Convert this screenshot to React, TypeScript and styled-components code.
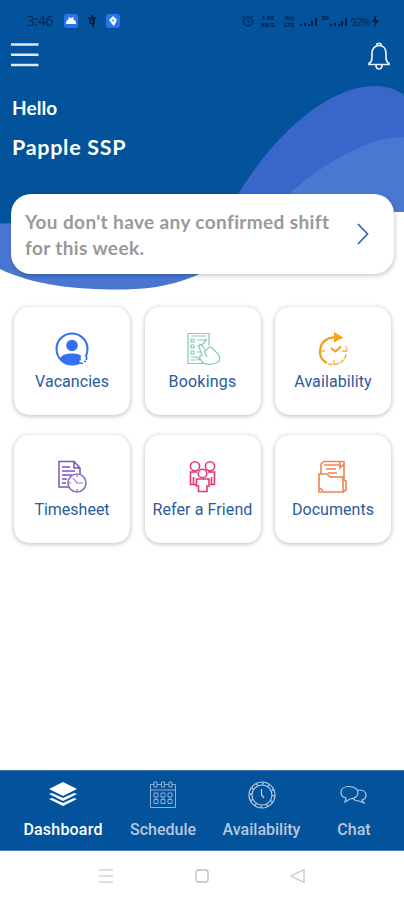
import React from "react";
import styled, { createGlobalStyle } from "styled-components";

const GlobalStyle = createGlobalStyle`
  * { box-sizing: border-box; }
  body { margin: 0; background: #fff; }
`;

const Screen = styled.div`
  width: 404px;
  height: 900px;
  display: flex;
  flex-direction: column;
  background: #fff;
  font-family: Roboto, "Liberation Sans", sans-serif;
  overflow: hidden;
`;

const Header = styled.header`
  position: relative;
  height: 300px;
  flex: none;
`;

const Backdrop = styled.svg`
  position: absolute;
  inset: 0;
  display: block;
`;

const HeaderContent = styled.div`
  position: relative;
  display: flex;
  flex-direction: column;
`;

const StatusBar = styled.div`
  height: 42px;
  padding: 0 25px 0 27px;
  display: flex;
  align-items: center;
  justify-content: space-between;
  color: #06264f;
`;

const StatusGroup = styled.div<{ $gap: number }>`
  display: flex;
  align-items: center;
  gap: ${(p) => p.$gap}px;
`;

const Time = styled.span`
  font: 400 14px/16px "Open Sans", sans-serif;
  letter-spacing: -0.4px;
  width: 28px;
  white-space: nowrap;
`;

const Stacked = styled.span<{ $width: number }>`
  width: ${(p) => p.$width}px;
  display: flex;
  flex-direction: column;
  font: 700 6px/7px Roboto, sans-serif;
  color: #041c3d;
  text-align: center;
  white-space: nowrap;
`;

const Battery = styled.span`
  font: 400 11px/13px "Open Sans", sans-serif;
  letter-spacing: -0.7px;
`;

const TopBar = styled.div`
  height: 30px;
  padding: 0 13px 0 11px;
  display: flex;
  justify-content: space-between;
`;

const IconButton = styled.button`
  padding: 0;
  border: 0;
  background: none;
  display: flex;
  height: 28px;
`;

const Greeting = styled.div`
  height: 122px;
  padding: 24px 12px 0;
  color: #fff;
  font-family: Lato, "Open Sans", sans-serif;
  font-weight: 700;
`;

const Hello = styled.p`
  margin: 0;
  font-size: 19px;
  line-height: 24px;
  letter-spacing: 0.1px;
`;

const UserName = styled.h1`
  margin: 13px 0 0;
  font-size: 21.5px;
  line-height: 28px;
  letter-spacing: 0.7px;
`;

const ShiftCard = styled.section`
  margin: 0 10px 0 11px;
  height: 80px;
  padding: 0 25px 0 14px;
  border-radius: 20px;
  background: #fff;
  box-shadow: 1px 2px 4px rgba(0, 0, 0, 0.2);
  display: flex;
  align-items: center;
  justify-content: space-between;
`;

const ShiftText = styled.p`
  margin: 2px 0 0;
  color: #999;
  font: 700 19px/26px Lato, "Open Sans", sans-serif;
  letter-spacing: 0.38px;
  white-space: nowrap;
`;

const Grid = styled.main`
  flex: 1;
  padding: 7px 13px 0 14px;
  display: grid;
  grid-template-columns: repeat(3, 116px);
  grid-auto-rows: 108px;
  column-gap: 14.5px;
  row-gap: 20px;
`;

const Tile = styled.div`
  border-radius: 15px;
  background: #fff;
  box-shadow: 0 1px 5px rgba(0, 0, 0, 0.28);
  padding-top: 24px;
  display: flex;
  flex-direction: column;
  align-items: center;
`;

const TileLabel = styled.span<{ $spacing: number }>`
  margin-top: 5px;
  color: #2b5a9d;
  font-size: 16px;
  line-height: 20px;
  letter-spacing: ${(p) => p.$spacing}px;
  white-space: nowrap;
`;

const BottomNav = styled.nav`
  height: 81px;
  padding: 0 14px;
  background: #02539b;
  border-top: 1px solid #3b73b5;
  border-bottom: 1px solid #5384c0;
  display: grid;
  grid-template-columns: 98px 102px 95px 90px;
  flex: none;
`;

const NavItem = styled.div<{ $active?: boolean }>`
  padding-top: 9px;
  display: flex;
  flex-direction: column;
  align-items: center;
  color: ${(p) => (p.$active ? "#fff" : "#b8c6de")};
`;

const NavLabel = styled.span<{ $spacing: number }>`
  margin-top: 10px;
  font-size: 16px;
  font-weight: 500;
  line-height: 20px;
  letter-spacing: ${(p) => p.$spacing}px;
`;

const SystemNav = styled.footer`
  height: 49px;
  flex: none;
  padding: 1px 96px 0 96px;
  display: flex;
  align-items: center;
  justify-content: space-between;
`;

const VacanciesIcon = () => (
  <svg width="36" height="36" viewBox="0 0 36 36">
    <circle cx="18" cy="18" r="15.5" fill="none" stroke="#3470ed" strokeWidth="2" />
    <circle cx="18" cy="14.500" r="5.800" fill="#3470ed" />
    <path d="M6 28C8 23 13 22.500 18 22.500S27 23 29 28C24 34.500 12 34.500 6 28Z" fill="#3470ed" />
    <circle cx="30" cy="29.500" r="4.500" fill="#fff" />
    <g stroke="#3470ed" strokeWidth="1.7" fill="none">
      <path d="M26 27v2.500M32.500 25v4M26 32l3 .5M30 30.500h2" />
    </g>
  </svg>
);

const BookingsIcon = () => (
  <svg width="36" height="36" viewBox="0 0 36 36" fill="none" stroke="#82cdb0" strokeWidth="1.2" strokeLinejoin="round">
    <path d="M22 32.500H3V2.500H24V15M6 5h15" />
    <path d="M6 8h3v3H6zM6 14h3v3H6zM6 20h3v3H6zM12 9h9M12 15h4M12 21h4M6 26h5l3 3 2-3M6 29h5" />
    <path d="M17 31l-3-5 3-2-3-8c0-3 3-3 4 0l3 4 2-3 3-1 7 7c3 4 2 8-2 9-5 2-11 2-14-1z" fill="#fff" />
    <path d="M19 20l3 6M14 13l3 1 5-6" />
  </svg>
);

const ClockArrowIcon = () => (
  <svg width="36" height="36" viewBox="0 0 36 36" fill="none">
    <path d="M22 6.500C11 6 5 12 5 21c0 5 3 9 7 11" stroke="#f0a11c" strokeWidth="2.3" />
    <path d="M19 1l9.500 5.500-9.500 5z" fill="#f5a519" />
    <path d="M13 33c7 2 17-1 18-10" stroke="#f4b150" strokeWidth="1.5" strokeDasharray="5 1" />
    <path d="M30.500 15q2 3 1.500 6" stroke="#f5c27d" strokeWidth="1.5" />
    <path d="M16 17l4.500 3.500 5.500-5" stroke="#f0a11c" strokeWidth="2" />
    <path d="M6 20h4M27 20h5M19 29v4" stroke="#f4b35d" strokeWidth="1.4" />
  </svg>
);

const TimesheetIcon = () => (
  <svg width="36" height="36" viewBox="0 0 36 36" fill="none" stroke="#7953b7" strokeWidth="1.5">
    <path d="M16 28H5V2.5h15l6 6.5v8M20 3v6h6M8 8h8M8 12h13M8 16h10M8 20h5M8 24h4" />
    <circle cx="23" cy="24" r="9" fill="#fff" stroke="#9273c6" strokeWidth="1.7" />
    <path d="M19 19l4 5h6M23 16v2M23 30v2M15 24h2" stroke="#9273c6" strokeWidth="1.2" />
  </svg>
);

const FriendsIcon = () => (
  <svg width="36" height="36" viewBox="0 0 36 36" fill="none" stroke="#df397c" strokeWidth="1.6">
    <circle cx="10" cy="7.300" r="4.600" />
    <circle cx="25" cy="7.300" r="4.600" />
    <path d="M12 13H5.500v12.500H11M23 13h6.500v12.500H25M8.500 25v-7M26.500 25v-7" />
    <circle cx="17.500" cy="14.500" r="4.300" fill="#fff" />
    <path d="M11.500 28v-8h12.500v8M13.500 26v6.500h8.500V26" fill="#fff" />
  </svg>
);

const DocumentsIcon = () => (
  <svg width="36" height="36" viewBox="0 0 36 36" fill="none" stroke="#ef8350" strokeWidth="1.6">
    <path d="M6 15V5l3-2.500h20v18M9 6h16M25 3v6l4-4M11 10h10M13 14h9" />
    <path d="M29 21l2 1v9l-3 2" />
    <path d="M4 33V15h8l3 3h13v15H4z" fill="#fff" />
    <path d="M5 29l3 3" />
  </svg>
);

const LayersIcon = () => (
  <svg width="30" height="30" viewBox="0 0 30 30" fill="currentColor">
    <path d="M15 2l14 7-14 7L1 9z" />
    <path d="M1 14l3-1 11 5 11-5 3 1-14 7zM1 19l3-1 11 5 11-5 3 1-14 7z" />
  </svg>
);

const CalendarIcon = () => (
  <svg width="30" height="30" viewBox="0 0 30 30" fill="none" stroke="currentColor" strokeWidth="1" opacity=".8">
    <path d="M2.5 4.5h25v23h-25zM2.5 10h25" />
    <path d="M6 2h3v5H6zM13.5 2h3v5h-3zM21 2h3v5h-3z" fill="#02539b" />
    <path d="M6 13h4v4H6zM13 13h4v4h-4zM20 13h4v4h-4zM6 19.500h4v4H6zM13 19.500h4v4h-4zM20 19.500h4v4h-4zM7 17l2 3M14 17l2 3M21 17l2 3" />
  </svg>
);

const ClockIcon = () => (
  <svg width="30" height="30" viewBox="0 0 30 30" fill="none" stroke="currentColor">
    <circle cx="15" cy="15" r="13" strokeWidth="1.2" />
    <circle cx="15" cy="15" r="10" strokeWidth="1.2" />
    <circle cx="15" cy="15" r="11.5" strokeWidth="2" strokeDasharray="1.5 4.5" />
    <path d="M14.5 9v6l2.500 3" strokeWidth="1.3" />
  </svg>
);

const ChatIcon = () => (
  <svg width="30" height="30" viewBox="0 0 30 30" fill="none" stroke="currentColor" strokeWidth="1.2">
    <path d="M7 18l-1 4 5-3c5 0 8-3 8-6.500S15 6.500 10 6.500 2 9 2 12.500c0 3 2 5 5 5.500z" />
    <path d="M19 10c5 0 8 2 8 5 0 2-1 4-4 5l2 3-5-2c-3 0-5-1-6-3" />
  </svg>
);

const Signal = () => (
  <svg width="17" height="12" viewBox="0 0 17 12" fill="#041c3d">
    <path d="M0 9h2v2H0zM4 8h2v3H4zM8 9h2v2H8zM11 6h2v5h-2zM15 3h2v8h-2z" />
  </svg>
);

const tiles = [
  { label: "Vacancies", Icon: VacanciesIcon, spacing: 0.05 },
  { label: "Bookings", Icon: BookingsIcon, spacing: 0.2 },
  { label: "Availability", Icon: ClockArrowIcon, spacing: 0.1 },
  { label: "Timesheet", Icon: TimesheetIcon, spacing: 0 },
  { label: "Refer a Friend", Icon: FriendsIcon, spacing: 0.1 },
  { label: "Documents", Icon: DocumentsIcon, spacing: 0.05 },
];

const navItems = [
  { label: "Dashboard", Icon: LayersIcon, spacing: 0.2, active: true },
  { label: "Schedule", Icon: CalendarIcon, spacing: 0 },
  { label: "Availability", Icon: ClockIcon, spacing: 0 },
  { label: "Chat", Icon: ChatIcon, spacing: 0 },
];

export default function App() {
  return (
    <Screen>
      <GlobalStyle />
      <Header>
        <Backdrop width="404" height="300" viewBox="0 0 404 300">
          <path d="M0 223V269C35 286 80 290 125 289.500C155 289 178 284 204 272L300 223Z" fill="#4876d1" />
          <path d="M0 0H404V212H360L0 223.500Z" fill="#02539b" />
          <path d="M404 95C395 88.500 385 86 375 86C329 86 275 133 239 193L230 212H404Z" fill="#3966cb" />
          <path d="M404 137C370 137 328 160 290 193L270 212H404Z" fill="#4a78d0" />
        </Backdrop>
        <HeaderContent>
          <StatusBar>
            <StatusGroup $gap={9}>
              <Time>3:46</Time>
              <svg width="14" height="14" viewBox="0 0 14 14">
                <rect width="14" height="14" rx="3" fill="#2874ee" />
                <path d="M2 10q0-4 3-5L4 3l3 1 3-1-1 2q3 1 3 5z" fill="#fff" />
              </svg>
              <svg width="10" height="14" viewBox="0 0 10 14" fill="none" stroke="#041c3d" strokeWidth="1.6">
                <path d="M4 1l2 2M1 4h8M7 4v5H3V6h4M6 8v5" />
              </svg>
              <svg width="14" height="14" viewBox="0 0 14 14">
                <rect width="14" height="14" rx="3" fill="#2874ee" />
                <path d="M7 2l4 4-3 6-2-2-3-4z" fill="#fff" />
                <path d="M7 5v3M5.500 6.500h3" stroke="#6ea2f5" />
              </svg>
            </StatusGroup>
            <StatusGroup $gap={3}>
              <svg width="12" height="12" viewBox="0 0 12 12" fill="none" stroke="#041c3d">
                <circle cx="6" cy="6.500" r="4.500" />
                <path d="M6 4v3h2M1 2l2-1.500M11 2L9 .5" />
              </svg>
              <Stacked $width={21}><span>1.00</span><span>KB/S</span></Stacked>
              <Stacked $width={16}><span>Vo)</span><span>LTE</span></Stacked>
              <Signal />
              <StatusGroup $gap={0}>
                <Stacked $width={10}><span>5G</span><span>&nbsp;</span></Stacked>
                <Signal />
              </StatusGroup>
              <StatusGroup $gap={2}>
                <Battery>92%</Battery>
                <svg width="7" height="12" viewBox="0 0 7 12"><path d="M4 0L0 7h3l-1 5 5-7H4z" fill="#041c3d" /></svg>
              </StatusGroup>
            </StatusGroup>
          </StatusBar>
          <TopBar>
            <IconButton aria-label="Menu">
              <svg width="28" height="28" viewBox="0 0 28 28" stroke="#e1e8f5" strokeWidth="2.4">
                <path d="M0 2.500h27.500M0 12.800h27.500M0 23h27.500" />
              </svg>
            </IconButton>
            <IconButton aria-label="Notifications">
              <svg width="24" height="28" viewBox="0 0 24 28" fill="none" stroke="#e8f0fb" strokeWidth="1.7">
                <path d="M2 22.500v-1q3-2 3-6v-4c0-5 3-8 7-8s7 3 7 8v4q0 4 3 6v1zM10 3.500V2q2-1.500 4 0v1.500M9 23q0 4 3 4t3-4" />
              </svg>
            </IconButton>
          </TopBar>
          <Greeting>
            <Hello>Hello</Hello>
            <UserName>Papple SSP</UserName>
          </Greeting>
          <ShiftCard>
            <ShiftText>You don't have any confirmed shift<br />for this week.</ShiftText>
            <svg width="12" height="22" viewBox="0 0 12 22" fill="none" stroke="#2e64ad" strokeWidth="1.700">
              <path d="M1 1l9.500 10L1 21" />
            </svg>
          </ShiftCard>
        </HeaderContent>
      </Header>
      <Grid>
        {tiles.map(({ label, Icon, spacing }) => (
          <Tile key={label}>
            <Icon />
            <TileLabel $spacing={spacing}>{label}</TileLabel>
          </Tile>
        ))}
      </Grid>
      <BottomNav>
        {navItems.map(({ label, Icon, spacing, active }) => (
          <NavItem key={label} $active={active}>
            <Icon />
            <NavLabel $spacing={spacing}>{label}</NavLabel>
          </NavItem>
        ))}
      </BottomNav>
      <SystemNav>
        <svg width="20" height="16" viewBox="0 0 20 16" stroke="#d2d2d2" strokeWidth="1.5"><path d="M3 2h14M3 8h14M3 14h14" /></svg>
        <svg width="16" height="16" viewBox="0 0 16 16" fill="none" stroke="#bdbdbd" strokeWidth="1.300"><rect x="2" y="2" width="12" height="12" rx="2.500" /></svg>
        <svg width="20" height="16" viewBox="0 0 20 16" fill="none" stroke="#c5c5c5" strokeWidth="1.300" strokeLinejoin="round"><path d="M3 8l13-6.500v13z" /></svg>
      </SystemNav>
    </Screen>
  );
}
